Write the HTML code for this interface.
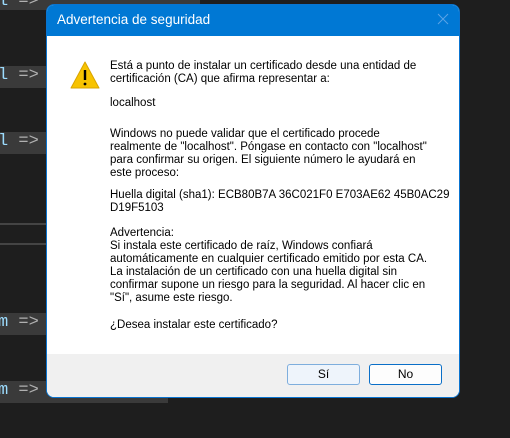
<!DOCTYPE html>
<html><head><meta charset="utf-8"><style>
body{margin:0;width:510px;height:438px;background:#1e1e1e;position:relative;overflow:hidden;font-family:"Segoe UI","Liberation Sans",sans-serif}
.hl{position:absolute;left:0;background:#3a3a3a;height:22px}
.code{position:absolute;font-family:"Liberation Mono",monospace;font-size:17px;color:#9cdcfe;white-space:pre}
.code b{color:#b0b0b0;font-weight:normal}
.line{position:absolute;left:0;width:46px;height:2px;background:#444}
.dlg{position:absolute;left:46px;top:4px;width:412px;height:392px;background:#fff;border:1px solid #0a74d0;border-radius:8px;overflow:hidden}
.tb{position:absolute;left:0;top:0;right:0;height:31px;background:#0078d4;color:#fff;font-size:13.5px}
.tb span{position:absolute;left:10px;top:7px}
.x{position:absolute;right:10px;top:8px;width:12px;height:12px}
.txt{position:absolute;left:63px;font-size:11.5px;line-height:13px;color:#000;white-space:nowrap}
.ft{position:absolute;left:0;right:0;bottom:0;height:43px;background:#f0f0f0}
.btn{position:absolute;top:10px;width:71px;height:19px;border-radius:3px;font-size:12px;text-align:center;line-height:19px;color:#000}
</style></head><body>
<div class="hl" style="top:-12px;width:200px"></div>
<div class="code" style="left:-2px;top:-8px">l <b>=&gt;</b></div>
<div class="hl" style="top:66px;width:46px"></div>
<div class="code" style="left:-2px;top:66px">l <b>=&gt;</b></div>
<div class="hl" style="top:132px;width:46px"></div>
<div class="code" style="left:-2px;top:132px">l <b>=&gt;</b></div>
<div class="line" style="top:223px"></div>
<div class="line" style="top:243px"></div>
<div class="hl" style="top:313px;width:46px"></div>
<div class="code" style="left:-2px;top:313px">m <b>=&gt;</b></div>
<div class="hl" style="top:381px;width:168px"></div>
<div class="code" style="left:-2px;top:381px">m <b>=&gt;</b> LoadHan</div>
<div class="dlg">
<div class="tb"><span>Advertencia de seguridad</span>
<svg class="x" viewBox="0 0 12 12"><path d="M1 1L11 11M11 1L1 11" stroke="#5aa3e6" stroke-width="1"/></svg></div>
<svg style="position:absolute;left:23px;top:55px" width="30" height="30" viewBox="0 0 30 30"><path d="M15 2L29 28H1Z" fill="#f7c300" stroke="#d9a400" stroke-width="1" stroke-linejoin="round"/><rect x="13.8" y="10" width="2.4" height="10" fill="#000"/><circle cx="15" cy="24" r="1.4" fill="#000"/></svg>
<div class="txt" style="top:55px">Está a punto de instalar un certificado desde una entidad de<br>certificación (CA) que afirma representar a:</div>
<div class="txt" style="top:92px">localhost</div>
<div class="txt" style="top:123px">Windows no puede validar que el certificado procede<br>realmente de "localhost". Póngase en contacto con "localhost"<br>para confirmar su origen. El siguiente número le ayudará en<br>este proceso:</div>
<div class="txt" style="top:184px">Huella digital (sha1): ECB80B7A 36C021F0 E703AE62 45B0AC29<br>D19F5103</div>
<div class="txt" style="top:222px">Advertencia:<br>Si instala este certificado de raíz, Windows confiará<br>automáticamente en cualquier certificado emitido por esta CA.<br>La instalación de un certificado con una huella digital sin<br>confirmar supone un riesgo para la seguridad. Al hacer clic en<br>"Sí", asume este riesgo.</div>
<div class="txt" style="top:314px">¿Desea instalar este certificado?</div>
<div class="ft">
<div class="btn" style="left:240px;background:#eef4fb;border:1px solid #7eaedd">Sí</div>
<div class="btn" style="left:322px;background:#fdfdfd;border:1px solid #0a6fc8">No</div>
</div>
</div>
</body></html>
